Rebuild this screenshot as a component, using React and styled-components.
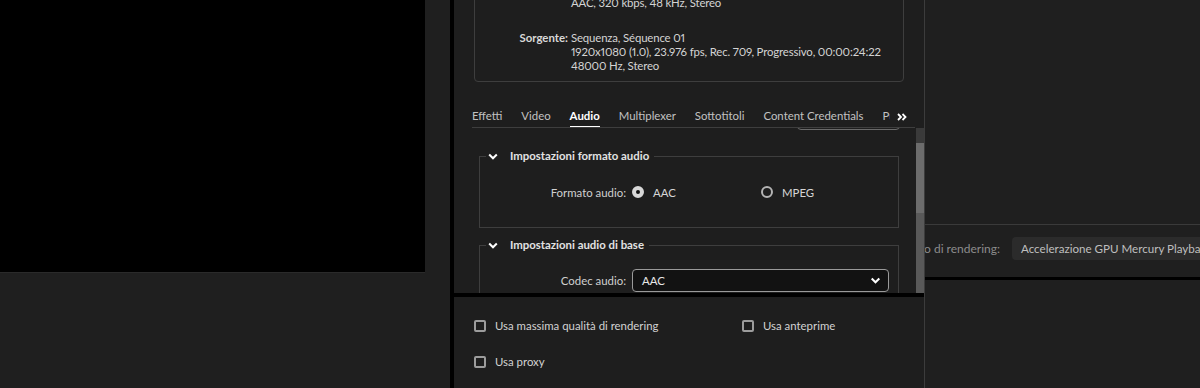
import React from 'react'
import styled, { createGlobalStyle } from 'styled-components'

const GlobalStyle = createGlobalStyle`
  html, body {
    margin: 0;
    background: #1f1f1f;
  }
  body {
    font-family: Lato, "Liberation Sans", sans-serif;
    font-size: 11.4px;
    font-variant-numeric: proportional-nums;
    color: #d2d2d2;
  }
`

const Page = styled.div`
  position: relative;
  width: 1200px;
  height: 388px;
  overflow: hidden;
  display: grid;
  grid-template-columns: 450px 1fr;
  background: #1f1f1f;
`

const LeftColumn = styled.div`
  display: flex;
  flex-direction: column;
`

const Preview = styled.div`
  width: 425px;
  height: 272px;
  background: #000;
  border-bottom: 1px solid #2a2a2a;
`

const RightColumn = styled.div`
  display: flex;
  flex-direction: column;
  padding-top: 224px;
`

const Rule = styled.div`
  height: ${({ thick }) => (thick ? '3px' : '1px')};
  background: ${({ thick }) => (thick ? '#000' : '#3a3a3a')};
  margin-top: ${({ gap }) => gap || 0}px;
`

const RendererRow = styled.div`
  display: grid;
  grid-template-columns: 550px 1fr;
  column-gap: 12px;
  align-items: center;
  margin-top: 12px;
  white-space: nowrap;
`

const RendererLabel = styled.span`
  text-align: right;
  color: #8c8c8c;
  font-size: 12px;
`

const RendererSelect = styled.div`
  height: 23px;
  line-height: 23px;
  padding-left: 9px;
  border-radius: 4px;
  background: #2b2b2b;
  color: #bfbfbf;
  font-size: 11.6px;
  width: 320px;
`

const Dialog = styled.div`
  position: absolute;
  left: 450px;
  top: 0;
  bottom: 0;
  width: 470px;
  border-left: 4px solid #000;
  border-right: 1px solid #3c3c3c;
  background: #1e1e1e;
  display: flex;
  flex-direction: column;
  overflow: hidden;
`

const Header = styled.div`
  padding: 0 20px;
  flex-shrink: 0;
`

const Summary = styled.div`
  margin-top: -55px;
  border: 1px solid #3e3e3e;
  border-radius: 4px;
  padding: 8px 10px;
  display: flex;
  flex-direction: column;
  gap: 21px;
`

const InfoBlock = styled.div`
  display: grid;
  grid-template-columns: 83px 1fr;
  column-gap: 3px;
  line-height: 14px;
`

const InfoLabel = styled.span`
  font-weight: 700;
  text-align: right;
  color: #d8d8d8;
`

const InfoValue = styled.div`
  display: flex;
  flex-direction: column;
  color: #d4d4d4;
  white-space: nowrap;
  letter-spacing: -0.15px;
`

const TabBar = styled.div`
  display: flex;
  margin: 22px -11px 0 -2px;
  border-bottom: 1px solid #3e3e3e;
  height: 23px;
`

const TabList = styled.div`
  display: flex;
  gap: 19px;
  flex: 1;
  overflow: hidden;
  white-space: nowrap;
`

const Tab = styled.div`
  padding-top: 5px;
  line-height: 14px;
  color: ${({ active }) => (active ? '#ffffff' : '#c2c2c2')};
  font-weight: ${({ active }) => (active ? 700 : 400)};
  border-bottom: 2px solid ${({ active }) => (active ? '#ffffff' : 'transparent')};
  margin-bottom: -1px;
`

const MoreTabs = styled.div`
  width: 25px;
  padding-left: 7px;
  padding-top: 9px;
  flex-shrink: 0;
  box-sizing: border-box;
  line-height: 0;
`

const ScrollArea = styled.div`
  flex: 0 0 165px;
  display: flex;
  overflow: hidden;
`

const ScrollContent = styled.div`
  flex: 1;
  overflow: hidden;
  display: flex;
  flex-direction: column;
`

const CutSelect = styled.div`
  margin: -22px 0 0 343px;
  width: 103px;
  height: 24px;
  box-sizing: border-box;
  border: 1px solid #6a6a6a;
  border-radius: 4px;
  flex-shrink: 0;
`

const Section = styled.fieldset`
  margin: ${({ gap }) => gap}px 17px 0 25px;
  padding: ${({ pad }) => pad};
  border: 1px solid #3e3e3e;
  min-width: 0;
  flex-shrink: 0;
`

const Legend = styled.legend`
  margin-left: 6px;
  padding: 0 5px 0 2px;
  display: flex;
  align-items: center;
  gap: 12px;
  line-height: 14px;
  font-weight: 700;
  color: #e2e2e2;
`

const FieldRow = styled.div`
  display: grid;
  grid-template-columns: 146px auto;
  column-gap: 6px;
  align-items: center;
  min-height: 22px;
  margin-top: ${({ gap }) => gap || 0}px;
  & + & {
    margin-top: 12px;
  }
`

const FieldLabel = styled.span`
  text-align: right;
  color: #d0d0d0;
  white-space: nowrap;
`

const RadioGroup = styled.div`
  display: grid;
  grid-template-columns: 129px auto;
`

const RadioOption = styled.label`
  display: flex;
  align-items: center;
  gap: 9px;
  color: #d6d6d6;
`

const RadioDot = styled.span`
  width: 12px;
  height: 12px;
  box-sizing: border-box;
  border-radius: 50%;
  border: ${({ checked }) => (checked ? '4px solid #d8d8d8' : '2px solid #b4b4b4')};
  background: ${({ checked }) => (checked ? '#111' : 'transparent')};
`

const Select = styled.div`
  width: 257px;
  height: 23px;
  box-sizing: border-box;
  border: 1px solid #9a9a9a;
  border-radius: 4px;
  background: #121212;
  display: flex;
  align-items: center;
  justify-content: space-between;
  padding: 0 7px 0 9px;
  color: #e8e8e8;
`

const Scrollbar = styled.div`
  width: 8px;
  background: #3a3a3a;
  display: flex;
  flex-direction: column;
  padding-top: 15px;
`

const Thumb = styled.div`
  flex: 1;
  background: linear-gradient(#6c6c6c 0, #6c6c6c 70px, #595959 70px);
`

const BlackBar = styled.div`
  height: 4px;
  background: #000;
  flex-shrink: 0;
`

const Footer = styled.div`
  padding: 21px 20px 0;
  display: grid;
  grid-template-columns: 268px 1fr;
  row-gap: 20px;
`

const CheckOption = styled.label`
  display: flex;
  align-items: center;
  gap: 9px;
  line-height: 16px;
  color: #d2d2d2;
  white-space: nowrap;
`

const CheckBox = styled.span`
  width: 12px;
  height: 12px;
  box-sizing: border-box;
  border: 2px solid #9c9c9c;
  border-radius: 2px;
`

const Chevron = ({ size = 10 }) => (
  <svg width={size} height={7} viewBox="0 0 10 7" fill="none">
    <path d="M1.2 1.5l3.8 3.8 3.8-3.8" stroke="#ffffff" strokeWidth="2" />
  </svg>
)

const DoubleChevron = () => (
  <svg width="10" height="8" viewBox="0 0 10 8" fill="none">
    <path d="M1 1l3 3-3 3M5.5 1l3 3-3 3" stroke="#ffffff" strokeWidth="1.8" />
  </svg>
)

const tabs = ['Effetti', 'Video', 'Audio', 'Multiplexer', 'Sottotitoli', 'Content Credentials', 'Pubblica']

const App = () => (
  <Page>
    <GlobalStyle />
    <LeftColumn>
      <Preview />
    </LeftColumn>
    <RightColumn>
      <Rule />
      <RendererRow>
        <RendererLabel>Modulo di rendering:</RendererLabel>
        <RendererSelect>Accelerazione GPU Mercury Playback Engine (CUDA)</RendererSelect>
      </RendererRow>
      <Rule thick gap={17} />
    </RightColumn>

    <Dialog>
      <Header>
        <Summary>
          <InfoBlock>
            <InfoLabel>Output:</InfoLabel>
            <InfoValue>
              <span>C:\Utenti\Video\Sequenza 01.mp4</span>
              <span>1920x1080 (1.0), 23.976 fps, Progressivo, 00:00:24:22</span>
              <span>VBR, 1 passaggio, Destinazione 10,00 Mbps</span>
              <span>AAC, 320 kbps, 48 kHz, Stereo</span>
            </InfoValue>
          </InfoBlock>
          <InfoBlock>
            <InfoLabel>Sorgente:</InfoLabel>
            <InfoValue>
              <span>Sequenza, Séquence 01</span>
              <span>1920x1080 (1.0), 23.976 fps, Rec. 709, Progressivo, 00:00:24:22</span>
              <span>48000 Hz, Stereo</span>
            </InfoValue>
          </InfoBlock>
        </Summary>
        <TabBar>
          <TabList>
            {tabs.map((t) => (
              <Tab key={t} active={t === 'Audio'}>
                {t}
              </Tab>
            ))}
          </TabList>
          <MoreTabs>
            <DoubleChevron />
          </MoreTabs>
        </TabBar>
      </Header>

      <ScrollArea>
        <ScrollContent>
          <CutSelect />
          <Section gap={19} pad="0 0 24px">
            <Legend>
              <Chevron />
              Impostazioni formato audio
            </Legend>
            <FieldRow gap={18}>
              <FieldLabel>Formato audio:</FieldLabel>
              <RadioGroup>
                <RadioOption>
                  <RadioDot checked />
                  AAC
                </RadioOption>
                <RadioOption>
                  <RadioDot />
                  MPEG
                </RadioOption>
              </RadioGroup>
            </FieldRow>
          </Section>
          <Section gap={10} pad="17px 0 24px">
            <Legend>
              <Chevron />
              Impostazioni audio di base
            </Legend>
            <FieldRow>
              <FieldLabel>Codec audio:</FieldLabel>
              <Select>
                AAC
                <Chevron size={11} />
              </Select>
            </FieldRow>
            <FieldRow>
              <FieldLabel>Frequenza di campionamento:</FieldLabel>
              <Select>48000 Hz</Select>
            </FieldRow>
          </Section>
        </ScrollContent>
        <Scrollbar>
          <Thumb />
        </Scrollbar>
      </ScrollArea>

      <BlackBar />

      <Footer>
        <CheckOption>
          <CheckBox />
          Usa massima qualità di rendering
        </CheckOption>
        <CheckOption>
          <CheckBox />
          Usa anteprime
        </CheckOption>
        <CheckOption>
          <CheckBox />
          Usa proxy
        </CheckOption>
      </Footer>
    </Dialog>
  </Page>
)

export default App
